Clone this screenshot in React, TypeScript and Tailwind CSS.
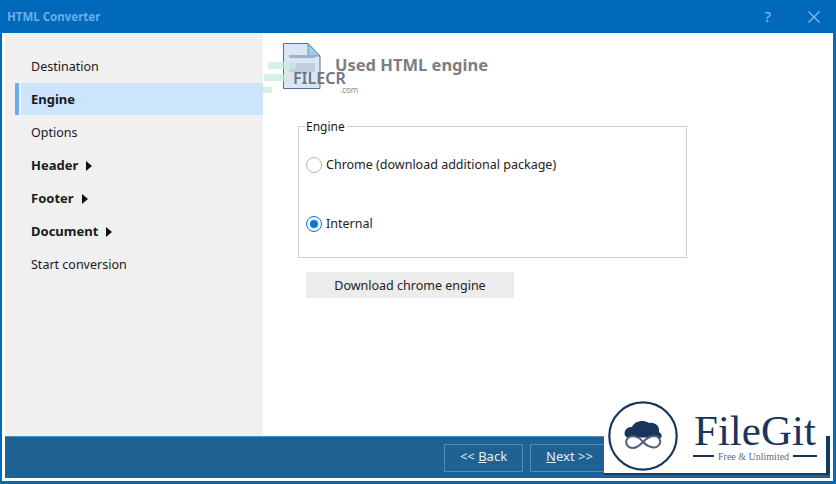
import React from "react";

const font = { fontFamily: '"Noto Sans", Tahoma, sans-serif' };

function NavItem({ label, bold, active, arrow }: { label: string; bold?: boolean; active?: boolean; arrow?: boolean }) {
  return (
    <div className="h-[33px] flex items-stretch">
      <div className={`w-[4px] mb-[1px] ${active ? "bg-[#66aef0]" : ""}`} />
      <div className="w-[2px]" />
      <div className={`flex-1 flex items-center pl-[10px] mb-[1px] text-[#1a1a1a] ${active ? "bg-[#cce4fc]" : ""} ${bold ? "font-bold text-[13px] pt-[1px]" : "text-[12.5px] pt-[3px]"}`}>
        <span>{label}</span>
        {arrow && (
          <svg width="6" height="10" viewBox="0 0 6 10" className="ml-[8px]">
            <path d="M0 0 L6 5 L0 10 Z" fill="#111" />
          </svg>
        )}
      </div>
    </div>
  );
}

function FooterButton({ children }: { children: React.ReactNode }) {
  return (
    <div className="w-[79px] h-[28px] pb-[2px] border border-[#4a8fc0] flex items-center justify-center text-[13px] text-[#e4eef6]">
      {children}
    </div>
  );
}

export default function App() {
  return (
    <div className="relative w-[836px] h-[484px] overflow-hidden bg-[#0069ba] flex flex-col" style={font}>
      <div className="h-[33px] flex items-center pl-[7px] shrink-0">
        <span className="text-[11.5px] font-bold text-[#6aaee6]">HTML Converter</span>
        <span className="ml-auto mr-[37px] text-[15px] text-[#8cc0ea]">?</span>
        <svg width="12" height="12" viewBox="0 0 12 12" className="mr-[16px]">
          <path d="M0.5 0.5 L11.5 11.5 M11.5 0.5 L0.5 11.5" stroke="#8cc0ea" strokeWidth="1.2" />
        </svg>
      </div>
      <div className="flex-1 ml-[2px] mr-[3px] mb-[3px] bg-white flex flex-col pl-[3px] pr-[3px] pb-[3px]">
        <div className="flex-1 flex">
          <div className="w-[258px] bg-[#f0f0f0] pt-[17px] pl-[10px]">
            <NavItem label="Destination" />
            <NavItem label="Engine" bold active />
            <NavItem label="Options" />
            <NavItem label="Header" bold arrow />
            <NavItem label="Footer" bold arrow />
            <NavItem label="Document" bold arrow />
            <NavItem label="Start conversion" />
          </div>
          <div className="flex-1 pl-[35px] pt-[93px]">
            <fieldset className="w-[389px] h-[132px] border border-[#cfcfcf] relative">
              <span className="absolute left-[7px] top-[-8px] bg-white pr-[2px] text-[12px] leading-[16px] text-[#1a1a1a]">Engine</span>
              <div className="pl-[7px] pt-[29.5px] flex items-center gap-[4px] text-[12.5px] text-[#222] leading-[16px]">
                <span className="w-[16px] h-[16px] rounded-full border border-[#b5b5b5] bg-white" />
                <span>Chrome (download additional package)</span>
              </div>
              <div className="pl-[7px] pt-[43px] flex items-center gap-[4px] text-[12.5px] text-[#222] leading-[16px]">
                <span className="w-[16px] h-[16px] rounded-full border border-[#0078d7] bg-white flex items-center justify-center">
                  <span className="w-[8px] h-[8px] rounded-full bg-[#0078d7]" />
                </span>
                <span>Internal</span>
              </div>
            </fieldset>
            <div className="ml-[8px] mt-[14px] w-[208px] h-[26px] pt-[3px] bg-[#ececec] flex items-center justify-center text-[12.5px] text-[#222]">
              Download chrome engine
            </div>
          </div>
        </div>
        <div className="h-[42px] bg-[#1e6193] border-t border-[#4a8fc0] flex items-center gap-[7px] pl-[439px] shrink-0">
          <FooterButton>&lt;&lt;&nbsp;<span className="underline">B</span>ack</FooterButton>
          <FooterButton><span className="underline">N</span>ext &gt;&gt;</FooterButton>
        </div>
      </div>

      {/* page heading */}
      <div className="absolute left-[283px] top-[43px] flex items-start">
        <svg width="38" height="46" viewBox="0 0 38 46">
          <path d="M0.5 0.5 H25 L37 13 V45.5 H0.5 Z" fill="#dbe6f4" stroke="#5a6f8c" />
          <path d="M25 0.5 V13 H37 Z" fill="#9cd0ea" stroke="#5a6f8c" strokeWidth="0.7" />
          <rect x="6" y="12" width="26" height="3" fill="#9fb0c8" />
          <rect x="6" y="20" width="26" height="9" fill="#c2cfe2" />
        </svg>
        <span className="ml-[14px] mt-[10px] text-[16.5px] leading-[24px] font-bold text-[#7e7e7e]">Used HTML engine</span>
      </div>

      {/* FILECR watermark */}
      <div className="absolute left-[262px] top-[62px] w-[97px] h-[34px]">
        <div className="absolute left-[6px] top-[0px] w-[28px] h-[7px] bg-[#c6ecd9] opacity-70" />
        <div className="absolute left-[2px] top-[12px] w-[23px] h-[7px] bg-[#c6ecd9] opacity-70" />
        <div className="absolute left-[-2px] top-[25px] w-[12px] h-[6px] bg-[#c6ecd9] opacity-70" />
        <span className="absolute left-[31px] top-[7px] text-[16px] leading-[18px] font-semibold text-[#6e7684]">FILECR</span>
        <span className="absolute left-[78px] top-[23px] text-[8px] leading-[9px] text-[#8a8a8a]">.com</span>
      </div>

      {/* FileGit badge */}
      <div className="absolute left-[604px] top-[436px] w-[226px] h-[39px] bg-[#123a68]" />
      <div className="absolute left-[604px] top-[392px] w-[222px] h-[81px] bg-white">
        <svg width="70" height="70" viewBox="0 0 70 70" className="absolute left-[4px] top-[9px]">
          <circle cx="35" cy="35" r="33.7" fill="none" stroke="#16365c" strokeWidth="2.2" />
          <path d="M18 36 C14 31 19 25 24 26 C26 20 36 18 41 22 C47 21 52 25 51 31 C54 33 54 35 53 37 Z" fill="#16365c" />
          <path d="M35 41 C31 35 24 34 20 37 C16 41 19 47 25 47 C29 47 32 44 35 41 C38 38 41 35 46 35 C51 35 54 40 51 44 C48 48 41 47 35 41 Z" fill="#ffffff" stroke="#4d617c" strokeWidth="2" />
        </svg>
        <span className="absolute left-[90px] top-[21px] text-[43px] leading-[36px] text-[#17365d]" style={{ fontFamily: '"Liberation Serif", serif' }}>FileGit</span>
        <div className="absolute left-[89px] top-[63px] w-[21px] h-[2px] bg-[#17365d]" />
        <span className="absolute left-[114px] top-[59px] text-[10px] leading-[11px] text-[#5f6b7c]" style={{ fontFamily: '"Liberation Serif", serif' }}>Free &amp; Unlimited</span>
        <div className="absolute left-[189px] top-[63px] w-[24px] h-[2px] bg-[#17365d]" />
      </div>
    </div>
  );
}
